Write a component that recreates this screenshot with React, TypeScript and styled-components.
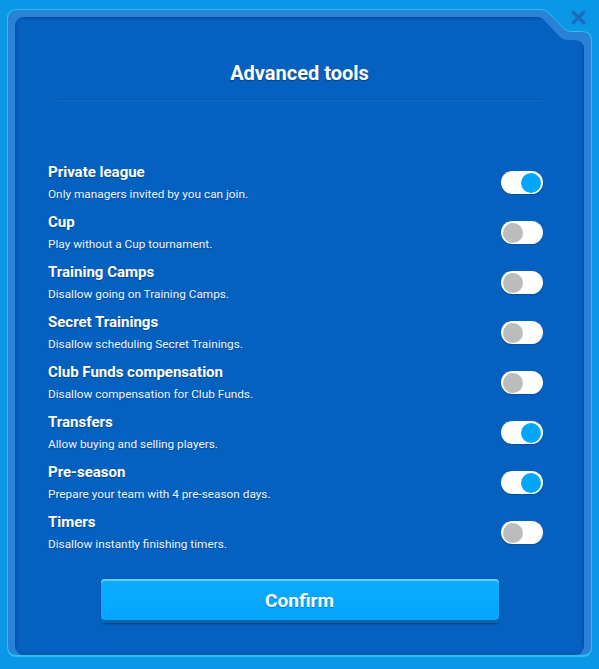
import React from "react";
import styled, { createGlobalStyle } from "styled-components";

const Global = createGlobalStyle`
  html, body { margin: 0; padding: 0; }
  body {
    background: #0b96e6;
    font-family: Roboto, "Liberation Sans", Arial, sans-serif;
    width: 599px;
    height: 669px;
    overflow: hidden;
  }
`;

const Page = styled.div`
  position: relative;
  width: 599px;
  height: 669px;
  padding: 9px 0 0 7px;
  box-sizing: border-box;
`;

const Frame = styled.div`
  width: 585px;
  height: 648px;
  box-sizing: border-box;
  padding: 1px 1px 2px 1px;
  background: #25c2f6;
  clip-path: path("M 10 0 L 534 0 Q 538 0 541 3 L 557 19 Q 560 22 564 22 L 575 22 Q 585 22 585 32 L 585 638 Q 585 648 575 648 L 10 648 Q 0 648 0 638 L 0 10 Q 0 0 10 0 Z");
`;

const Band = styled.div`
  width: 583px;
  height: 645px;
  box-sizing: border-box;
  padding: 7px 7px 0 7px;
  background: #2a81d5;
  clip-path: path("M 9 0 L 533 0 Q 537 0 540 3 L 556 19 Q 559 22 563 22 L 574 22 Q 583 22 583 31 L 583 636 Q 583 645 574 645 L 9 645 Q 0 645 0 636 L 0 9 Q 0 0 9 0 Z");
`;

const Inner = styled.div`
  width: 569px;
  height: 638px;
  box-sizing: border-box;
  background: #0561bf;
  box-shadow: inset 0 0 3px 1px rgba(0, 40, 110, 0.45);
  clip-path: path("M 10 0 L 522 0 Q 526 0 529 3 L 545 20 Q 548 23 552 23 L 559 23 Q 569 23 569 33 L 569 628 Q 569 638 559 638 L 10 638 Q 0 638 0 628 L 0 10 Q 0 0 10 0 Z");
  display: flex;
  flex-direction: column;
  padding-top: 44px;
`;

const Title = styled.h1`
  margin: 0;
  text-align: center;
  color: #ffffff;
  font-size: 20px;
  line-height: 24px;
  font-weight: 700;
  text-shadow: 0 1px 1px rgba(0, 30, 80, 0.5);
`;

const Separator = styled.div`
  margin: 14px 42px 0 42px;
  height: 1px;
  background: #0b54a6;
  box-shadow: 0 1px 0 rgba(60, 140, 230, 0.25);
`;

const List = styled.div`
  display: flex;
  flex-direction: column;
  gap: 11px;
  padding: 0 41px 0 33px;
  margin-top: 63px;
`;

const Row = styled.div`
  display: flex;
  align-items: center;
  justify-content: space-between;
  height: 39px;
`;

const TextCol = styled.div`
  display: flex;
  flex-direction: column;
  gap: 5px;
`;

const RowTitle = styled.div`
  color: #ffffff;
  font-size: 15px;
  line-height: 18px;
  font-weight: 700;
  text-shadow: 0 1px 1px rgba(0, 30, 80, 0.45);
`;

const RowDesc = styled.div`
  color: #eef4ff;
  font-size: 11.8px;
  line-height: 16px;
  font-weight: 400;
  text-shadow: 0 1px 1px rgba(0, 30, 80, 0.3);
`;

const Track = styled.div<{ $on: boolean }>`
  width: 42px;
  height: 23px;
  box-sizing: border-box;
  border-radius: 12px;
  background: #ffffff;
  padding: 1px 2px;
  display: flex;
  align-items: center;
  justify-content: ${(p) => (p.$on ? "flex-end" : "flex-start")};
  box-shadow: 0 1px 1px rgba(0, 30, 80, 0.25);
`;

const Knob = styled.div<{ $on: boolean }>`
  width: 20px;
  height: 20px;
  border-radius: 50%;
  background: ${(p) => (p.$on ? "#03a6fb" : "#bcbcbc")};
`;

const ButtonWrap = styled.div`
  display: flex;
  justify-content: center;
  margin-top: 27px;
`;

const ConfirmButton = styled.button`
  width: 398px;
  height: 44px;
  border: none;
  border-radius: 4px;
  background: linear-gradient(#0aabff, #04a6fd);
  box-shadow: inset 0 2px 0 #63cbff, inset 0 -3px 0 #0a62ad, 0 1px 2px rgba(0, 30, 80, 0.5);
  color: #ffffff;
  font-family: Roboto, "Liberation Sans", Arial, sans-serif;
  font-size: 19px;
  font-weight: 700;
  text-shadow: 0 1px 1px rgba(0, 50, 110, 0.45);
  padding: 0 0 1px 0;
  cursor: pointer;
`;

const CloseButton = styled.div`
  position: absolute;
  left: 571px;
  top: 10px;
  width: 15px;
  height: 15px;
  display: flex;
`;

const items = [
  { title: "Private league", desc: "Only managers invited by you can join.", on: true },
  { title: "Cup", desc: "Play without a Cup tournament.", on: false },
  { title: "Training Camps", desc: "Disallow going on Training Camps.", on: false },
  { title: "Secret Trainings", desc: "Disallow scheduling Secret Trainings.", on: false },
  { title: "Club Funds compensation", desc: "Disallow compensation for Club Funds.", on: false },
  { title: "Transfers", desc: "Allow buying and selling players.", on: true },
  { title: "Pre-season", desc: "Prepare your team with 4 pre-season days.", on: true },
  { title: "Timers", desc: "Disallow instantly finishing timers.", on: false },
];

export default function App() {
  return (
    <>
      <Global />
      <Page>
        <Frame>
          <Band>
            <Inner>
              <Title>Advanced tools</Title>
              <Separator />
              <List>
                {items.map((it) => (
                  <Row key={it.title}>
                    <TextCol>
                      <RowTitle>{it.title}</RowTitle>
                      <RowDesc>{it.desc}</RowDesc>
                    </TextCol>
                    <Track $on={it.on}>
                      <Knob $on={it.on} />
                    </Track>
                  </Row>
                ))}
              </List>
              <ButtonWrap>
                <ConfirmButton>Confirm</ConfirmButton>
              </ButtonWrap>
            </Inner>
          </Band>
        </Frame>
        <CloseButton>
          <svg width="15" height="15" viewBox="0 0 15 15">
            <path d="M2.5 2.5 L12.5 12.5 M12.5 2.5 L2.5 12.5" stroke="#1b6cbf" strokeWidth="3.6" strokeLinecap="round" />
          </svg>
        </CloseButton>
      </Page>
    </>
  );
}
